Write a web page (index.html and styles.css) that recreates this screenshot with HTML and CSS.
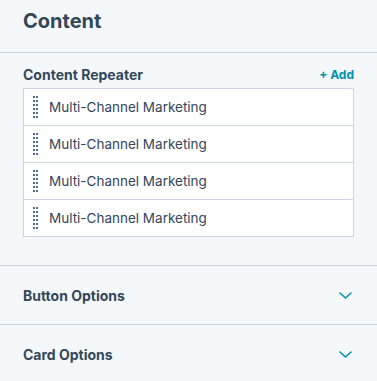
FILE: index.html
```html
<!DOCTYPE html>
<html lang="en">
<head>
  <meta charset="UTF-8">
  <title>Content</title>
  <link rel="stylesheet" href="styles.css">
</head>
<body>
  <div class="panel">
    <div class="panel-header">
      <h1>Content</h1>
    </div>

    <div class="repeater">
      <div class="repeater-head">
        <span class="repeater-title">Content Repeater</span>
        <a class="add-link" href="#">+ Add</a>
      </div>
      <ul class="repeater-list">
        <li><span class="grip"></span>Multi-Channel Marketing</li>
        <li><span class="grip"></span>Multi-Channel Marketing</li>
        <li><span class="grip"></span>Multi-Channel Marketing</li>
        <li><span class="grip"></span>Multi-Channel Marketing</li>
      </ul>
    </div>

    <div class="accordion">
      <span>Button Options</span>
      <svg class="chevron" width="13" height="7" viewBox="0 0 13 7"><path d="M1 1l5.5 5 5.5-5" fill="none" stroke="#0091ae" stroke-width="1.6" stroke-linecap="round" stroke-linejoin="round"/></svg>
    </div>
    <div class="accordion">
      <span>Card Options</span>
      <svg class="chevron" width="13" height="7" viewBox="0 0 13 7"><path d="M1 1l5.5 5 5.5-5" fill="none" stroke="#0091ae" stroke-width="1.6" stroke-linecap="round" stroke-linejoin="round"/></svg>
    </div>
  </div>
</body>
</html>
```

FILE: styles.css
```css
body {
  margin: 0;
  background-color: #f5f8fa;
  font-family: 'Inter', sans-serif;
  color: #33475b;
}
.panel {
  width: 377px;
}
.panel-header {
  height: 52px;
  padding: 0 23px;
  border-bottom: 1px solid #cbd6e2;
  box-sizing: content-box;
}
.panel-header h1 {
  margin: 0;
  padding-top: 6px;
  font-size: 20px;
  line-height: 30px;
  font-weight: 700;
}
.repeater {
  padding: 11px 23px 28px;
  border-bottom: 1px solid #cbd6e2;
}
.repeater-head {
  display: flex;
  justify-content: space-between;
  align-items: center;
  height: 20px;
  margin-bottom: 4px;
}
.repeater-title {
  font-size: 14px;
  font-weight: 700;
}
.add-link {
  font-size: 12px;
  font-weight: 700;
  color: #0091ae;
  text-decoration: none;
}
.repeater-list {
  list-style: none;
  margin: 0;
  padding: 0;
  background-color: #fff;
  border: 1px solid #cbd6e2;
}
.repeater-list li {
  display: flex;
  align-items: center;
  height: 36px;
  padding-left: 9px;
  font-size: 13.5px;
  border-top: 1px solid #cbd6e2;
}
.repeater-list li:first-child {
  border-top: none;
}
.grip {
  width: 5px;
  height: 22px;
  margin-right: 11px;
  background-image:
    linear-gradient(to right, #516f90 2px, transparent 2px, transparent 3px, #516f90 3px);
  -webkit-mask-image: linear-gradient(#000 2px, transparent 2px);
  mask-image: linear-gradient(#000 2px, transparent 2px);
  mask-size: 5px 4px;
  -webkit-mask-size: 5px 4px;
}
.accordion {
  display: flex;
  justify-content: space-between;
  align-items: center;
  height: 58px;
  padding: 0 25px 0 23px;
  border-bottom: 1px solid #cbd6e2;
  font-size: 14px;
  font-weight: 700;
}
.chevron {
  display: block;
}
```
